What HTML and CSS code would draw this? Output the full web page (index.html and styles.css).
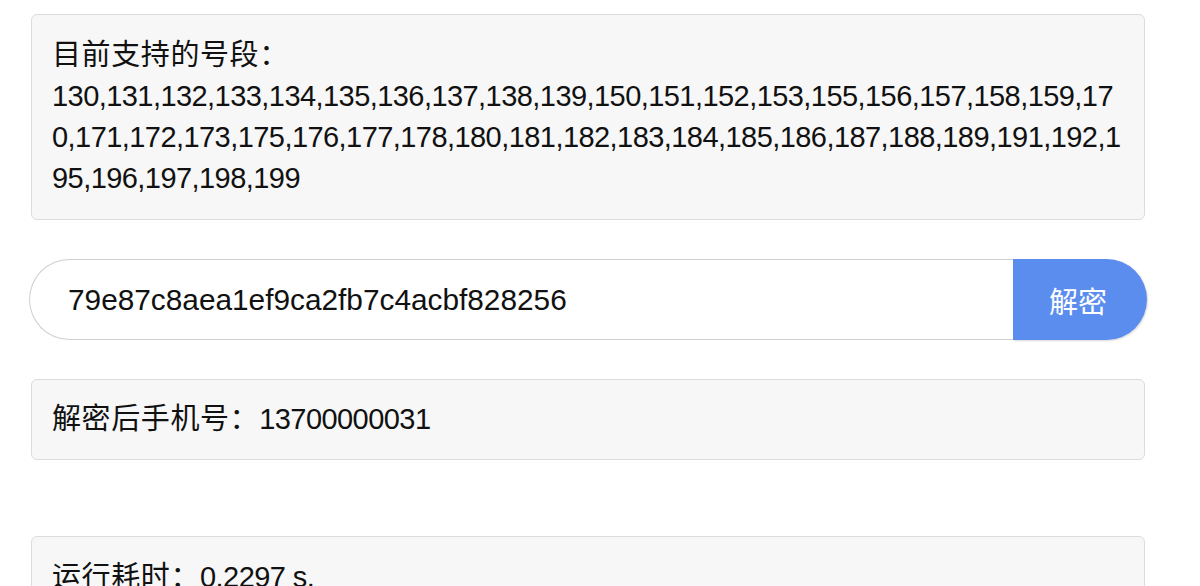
FILE: index.html
```html
<!DOCTYPE html>
<html lang="zh-CN">
<head>
<meta charset="utf-8">
<title>手机号解密</title>
<link rel="stylesheet" href="styles.css">
</head>
<body>
<main class="page">
  <section class="panel panel-info">
    <div class="label">目前支持的号段：</div>
    <div class="segments">130,131,132,133,134,135,136,137,138,139,150,151,152,153,155,156,157,158,159,170,171,172,173,175,176,177,178,180,181,182,183,184,185,186,187,188,189,191,192,195,196,197,198,199</div>
  </section>

  <form class="search">
    <input class="search-input" type="text" value="79e87c8aea1ef9ca2fb7c4acbf828256">
    <button class="search-button" type="button">解密</button>
  </form>

  <section class="panel panel-result"><span class="label">解密后手机号：</span>13700000031</section>

  <section class="panel panel-time"><span class="label">运行耗时：</span>0.2297 s.</section>
</main>
</body>
</html>
```

FILE: styles.css
```css
html, body {
  margin: 0;
  padding: 0;
  background: #ffffff;
}

body {
  font-family: "Liberation Sans", "Noto Sans CJK SC", sans-serif;
  color: #111111;
}

.page {
  display: flex;
  flex-direction: column;
  width: 1114px;
  padding: 14px 0 0 31px;
}

.panel {
  background: #f7f7f7;
  border: 1px solid #dcdcdc;
  border-radius: 6px;
  padding: 20px;
  font-size: 29px;
  line-height: 41px;
  letter-spacing: -0.56px;
}

.label {
  letter-spacing: 0.6px;
}

.segments {
  word-break: break-all;
}

.search {
  display: flex;
  margin: 39px -2px 39px -2px;
  height: 81px;
}

.search-input {
  flex: 1;
  min-width: 0;
  box-sizing: border-box;
  height: 81px;
  margin: 0;
  padding: 0 0 0 38px;
  border: 1px solid #cfcfcf;
  border-right: none;
  border-radius: 41px 0 0 41px;
  font-family: "Liberation Sans", sans-serif;
  font-size: 29.8px;
  color: #111111;
  background: #ffffff;
  outline: none;
}

.search-button {
  width: 134px;
  height: 81px;
  margin: 0;
  padding: 0 4px 0 0;
  border: none;
  border-radius: 0 41px 41px 0;
  background: #5b8def;
  color: #ffffff;
  font-family: "Noto Sans CJK SC", sans-serif;
  font-size: 29px;
  box-shadow: 1px 1px 2px rgba(0, 0, 0, 0.15);
}

.panel-result {
  padding-top: 19px;
  padding-bottom: 19px;
}

.panel-time {
  margin-top: 76px;
}
```
